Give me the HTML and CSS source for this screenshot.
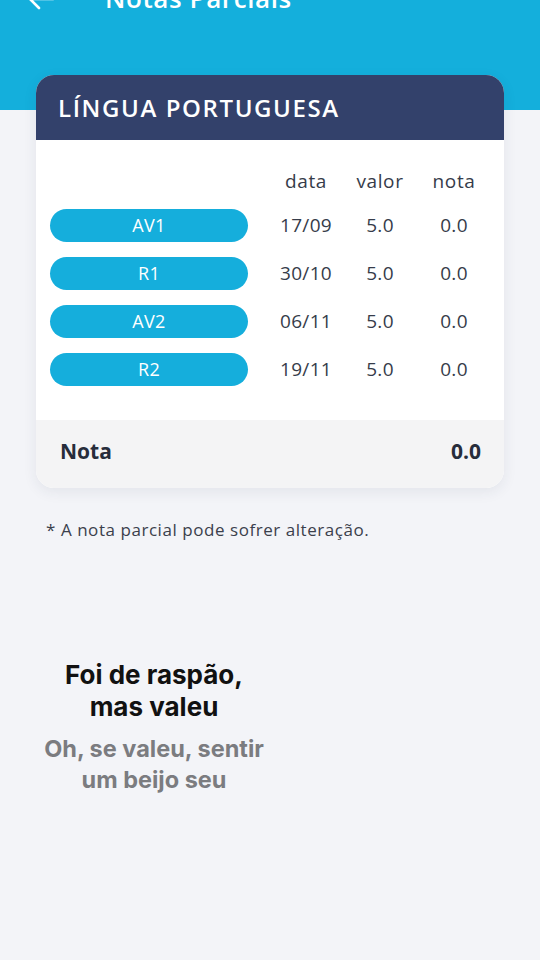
FILE: index.html
```html
<!DOCTYPE html>
<html lang="pt">
<head>
    <meta charset="UTF-8">
    <meta name="viewport" content="width=device-width, initial-scale=1.0">
    <title>Notas Parciais</title>
    <link rel="stylesheet" href="styles.css">
</head>
<body>
    <div class="topbar">
        <div class="topbar-row">
            <svg class="back" width="30" height="24" viewBox="0 0 30 24">
                <path d="M27 12H4M13 3L4 12l9 9" fill="none" stroke="#fff" stroke-width="2.6" stroke-linecap="round" stroke-linejoin="round"/>
            </svg>
            <span class="title">Notas Parciais</span>
        </div>
    </div>

    <div class="card">
        <div class="card-head">LÍNGUA PORTUGUESA</div>
        <div class="card-body">
            <div class="grid head-row">
                <span></span>
                <span>data</span>
                <span>valor</span>
                <span>nota</span>
            </div>
            <div class="grid row">
                <span class="pill">AV1</span>
                <span>17/09</span>
                <span>5.0</span>
                <span>0.0</span>
            </div>
            <div class="grid row">
                <span class="pill">R1</span>
                <span>30/10</span>
                <span>5.0</span>
                <span>0.0</span>
            </div>
            <div class="grid row">
                <span class="pill">AV2</span>
                <span>06/11</span>
                <span>5.0</span>
                <span>0.0</span>
            </div>
            <div class="grid row">
                <span class="pill">R2</span>
                <span>19/11</span>
                <span>5.0</span>
                <span>0.0</span>
            </div>
        </div>
        <div class="card-foot">
            <span>Nota</span>
            <span>0.0</span>
        </div>
    </div>

    <p class="note">* A nota parcial pode sofrer alteração.</p>

    <div class="lyrics">
        <p class="lyric-now">Foi de raspão,<br>mas valeu</p>
        <p class="lyric-next">Oh, se valeu, sentir<br>um beijo seu</p>
    </div>
</body>
</html>
```

FILE: styles.css
```css
body {
    margin: 0;
    background-color: #f3f4f8;
    font-family: "Open Sans", Lato, sans-serif;
    color: #363c4a;
}
.topbar {
    background-color: #14afdc;
    height: 110px;
    overflow: hidden;
}
.topbar-row {
    display: flex;
    align-items: center;
    margin-top: -20px;
    padding-left: 26px;
    height: 36px;
}
.back {
    margin-top: 2px;
}
.title {
    color: #fff;
    font-size: 26px;
    font-weight: 600;
    letter-spacing: 0.6px;
    margin-left: 49px;
}
.card {
    margin: -35px 36px 0 36px;
    border-radius: 18px;
    overflow: hidden;
    background: #fff;
    box-shadow: 0 4px 14px rgba(40, 50, 80, 0.08);
}
.card-head {
    background-color: #33416b;
    color: #fff;
    height: 65px;
    display: flex;
    align-items: center;
    padding-left: 22px;
    font-size: 24px;
    font-weight: 600;
    letter-spacing: 1.6px;
}
.card-body {
    padding: 21px 13px 27px 14px;
}
.grid {
    display: grid;
    grid-template-columns: 219px 74px 74px 74px;
    align-items: center;
    text-align: center;
    font-size: 19px;
    letter-spacing: 0.3px;
}
.head-row {
    height: 40px;
    letter-spacing: 0.6px;
}
.row {
    height: 48px;
}
.pill {
    width: 198px;
    height: 33px;
    line-height: 33px;
    border-radius: 17px;
    background-color: #15aedc;
    color: #fff;
    font-size: 18px;
}
.card-foot {
    background-color: #f4f4f5;
    height: 62px;
    padding: 0 23px 6px 24px;
    display: flex;
    align-items: center;
    justify-content: space-between;
    font-size: 21px;
    font-weight: 700;
    color: #272d3b;
}
.note {
    margin: 30px 0 0 46px;
    font-size: 17px;
    letter-spacing: 0.55px;
    color: #3b404c;
}
.lyrics {
    width: 260px;
    margin: 118px 0 0 24px;
    text-align: center;
    font-family: Inter, "Liberation Sans", sans-serif;
    font-weight: 700;
}
.lyric-now {
    margin: 0;
    font-size: 26px;
    line-height: 32px;
    color: #111;
}
.lyric-next {
    margin: 10px 0 0 0;
    font-size: 23.5px;
    line-height: 31px;
    color: #7b7c80;
}
```
